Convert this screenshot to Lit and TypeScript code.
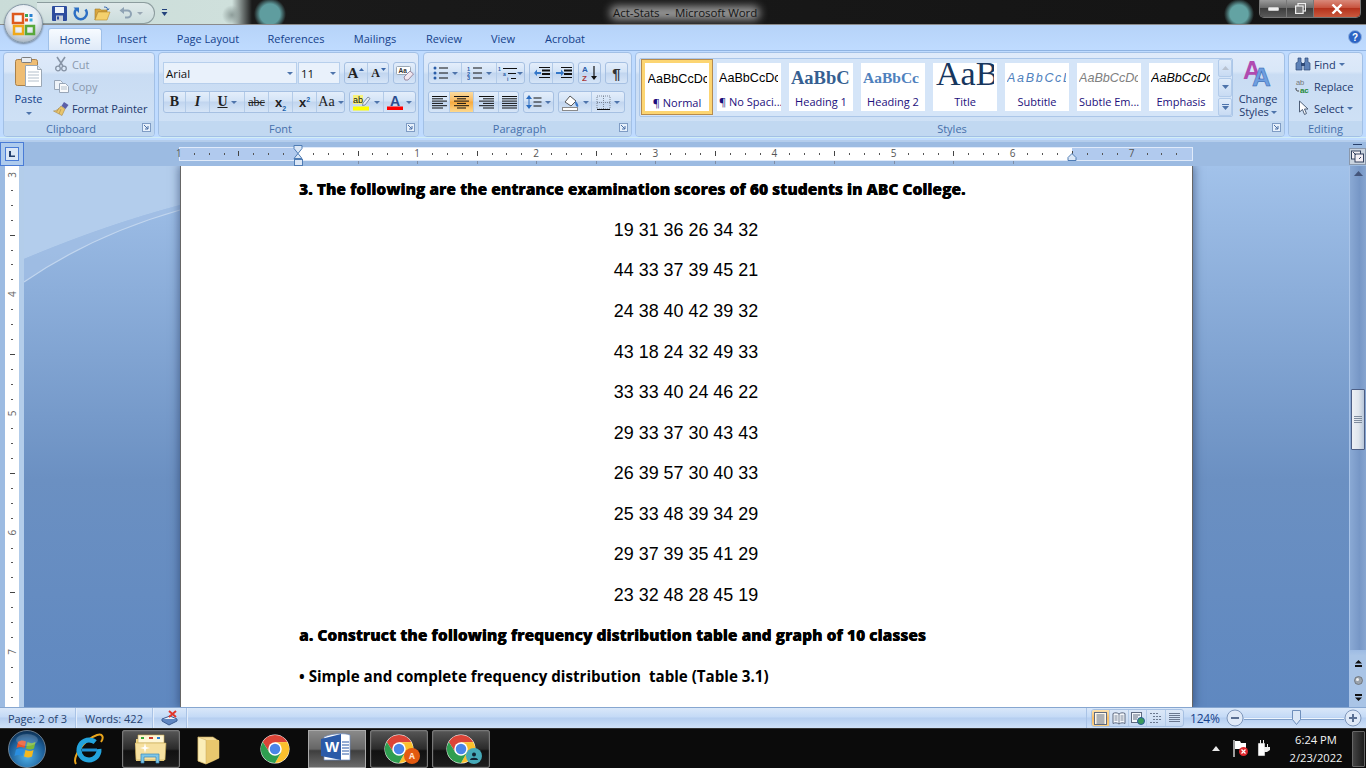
import { LitElement, html, css, svg } from "lit";
import { customElement } from "lit/decorators.js";

const caret = html`<i class="caret"></i>`;
const launcher = html`<svg class="launch" width="9" height="9" viewBox="0 0 9 9"><rect x=".5" y=".5" width="8" height="8" fill="#e6f0fb" stroke="#7f9cc4"/><path d="M2 2l4 4M6 3v3H3" fill="none" stroke="#4a6fa5"/></svg>`;

const lineIcon = (w: number, rows: [number, number][], h = 14) => html`<svg width=${w} height=${h} viewBox="0 0 ${w} ${h}">${rows.map(([x, l], i) => svg`<rect x=${x} y=${1 + i * 2.3} width=${l} height="1" fill="#111"/>`)}</svg>`;

const chrome = (size: number) => html`<svg width=${size} height=${size} viewBox="-16 -16 32 32">
  <circle r="15.5" fill="#fff"/>
  <path d="M-13-7.5A15 15 0 0 1 13-7.5L0-7-6 3.5Z" fill="#db4437"/>
  <path d="M13-7.5A15 15 0 0 1 0 15L6.5 3.5 0-7Z" fill="#fbc02d"/>
  <path d="M0 15A15 15 0 0 1-13-7.5L-6 3.5 6.5 3.5Z" fill="#2f9e50"/>
  <circle r="7.2" fill="#fff"/><circle r="5.6" fill="#4a85e8"/></svg>`;

@customElement("app-root")
export class AppRoot extends LitElement {
  static styles = css`
    :host { display: block; width: 1366px; height: 768px; overflow: hidden; position: relative; font: 11px "Open Sans", "Noto Sans", sans-serif; color: #15428b; }
    .app { display: grid; grid-template-rows: 25px 25px 90px 26px 541px 21px 40px; height: 768px; }
    svg { display: block; flex: none; }

    .orb { position: absolute; left: 4px; top: 4px; width: 37px; height: 37px; border-radius: 50%; z-index: 3; display: flex; align-items: center; justify-content: center;
      background: radial-gradient(circle at 50% 35%, #ffffff 0, #e9eef4 45%, #aab7c4 80%, #d8e0e6 100%); border: 1px solid #8597a6; box-shadow: 0 1px 2px rgba(0,0,0,.4); }

    .title { display: flex; align-items: flex-start; border-bottom: 1px solid #8a8a8a; box-sizing: border-box; position: relative;
      background:
        radial-gradient(circle at 270px 14px, #5f9d9f 0, #5f9d9f 10px, rgba(95,157,159,0) 16px),
        radial-gradient(circle at 1239px 14px, #63a3a3 0, #63a3a3 9px, rgba(99,163,163,0) 15px),
        radial-gradient(circle at 232px 15px, #8d9c99 0, rgba(141,156,153,0) 10px),
        linear-gradient(90deg, #cadcd8 0, #cfe0dc 232px, #1a1a1a 252px, #141414 100%); }
    .qat { margin: 2px 0 0 37px; width: 118px; height: 22px; box-sizing: border-box; border: 1px solid #8c9c9e; border-left: 0; border-radius: 0 11px 11px 0; background: linear-gradient(#dfe9ea, #cbdcdc); display: flex; align-items: center; padding-left: 15px; gap: 6px; }
    .qcaret { margin: 9px 0 0 5px; width: 9px; }
    .doc-title { position: absolute; left: 613px; top: 5px; white-space: pre; font-size: 11.5px; line-height: 16px; color: #161616; isolation: isolate; letter-spacing: -.05px; }
    .doc-title::before { content: ""; position: absolute; left: -3px; right: -3px; top: 1px; bottom: 1px; background: rgba(178,178,178,.82); filter: blur(4px); z-index: -1; border-radius: 6px; }
    .winbtns { margin-left: auto; margin-right: 5px; display: flex; height: 18px; box-sizing: border-box; border: 1px solid #777; border-top: 0; border-radius: 0 0 5px 5px; overflow: hidden; }
    .winbtns div { display: flex; align-items: center; justify-content: center; width: 27px; background: linear-gradient(#9a9a9a, #6a6a6a 45%, #3e3e3e 50%, #5a5a5a); border-right: 1px solid #777; box-sizing: border-box; }
    .winbtns .x { width: 46px; border: 0; background: linear-gradient(#d9897a, #c8543f 45%, #b5321c 50%, #c9593e); }

    .tabs { background: linear-gradient(#b6d3f8, #bfdbff); display: flex; align-items: flex-end; padding-left: 48px; position: relative; }
    .tab { height: 22px; line-height: 22px; color: #15428b; text-align: center; }
    .tab.on { background: linear-gradient(#f7fbff, #dfeaf8); border: 1px solid #9fc0e8; border-bottom: 0; border-radius: 3px 3px 0 0; box-sizing: border-box; }
    .help { position: absolute; right: 4px; top: 5px; }

    .ribbon { background: #bfdbff; border-top: 1px solid #8fb3e2; box-sizing: border-box; display: flex; padding: 1px 3px 0; gap: 3px; position: relative; }
    .ribbon::after { content: ""; position: absolute; left: 0; right: 0; bottom: 2px; height: 1px; background: #d2eef5; }
    .group { height: 85px; box-sizing: border-box; border: 1px solid #a2c0e6; border-radius: 4px; display: flex; flex-direction: column; overflow: hidden; background: linear-gradient(#dfeafa, #d9e7f8 22%, #c9dcf3 26%, #d0e2f6 100%); }
    .gbody { flex: 1; min-height: 0; display: flex; }
    .glabel { height: 15px; line-height: 15px; text-align: center; background: #c1d8f1; color: #4670ab; position: relative; }
    .glabel.pad { padding-right: 16px; }
    .launch { position: absolute; right: 3px; top: 2px; }

    .smalls { display: flex; flex-direction: column; }
    .sm { height: 22px; display: flex; align-items: center; gap: 3px; white-space: nowrap; color: #1e3a6e; letter-spacing: -.1px; }
    .sm.off { color: #8a99ae; }
    .sm .ic { width: 16px; display: flex; justify-content: center; }
    .paste { width: 49px; text-align: center; display: flex; flex-direction: column; align-items: center; padding-top: 3px; }
    .paste span { margin-top: 4px; line-height: 14px; color: #15428b; }
    .paste .caret { margin-top: 6px; }

    .caret { display: inline-block; width: 0; height: 0; border: 3px solid transparent; border-top: 3px solid #4e74ab; border-bottom: 0; flex: none; }
    .rows { display: flex; flex-direction: column; gap: 7px; padding: 9px 0 0 4px; }
    .row { display: flex; gap: 4px; height: 22px; }
    .bg { display: flex; height: 22px; box-sizing: border-box; border: 1px solid #a6c0e2; border-radius: 3px; background: linear-gradient(#e4eefb, #d3e3f6 45%, #c1d5ef 50%, #d6e5f7); overflow: hidden; }
    .seg { display: flex; align-items: center; justify-content: center; gap: 3px; box-sizing: border-box; border-right: 1px solid #b3cbe8; height: 100%; color: #111; flex: none; }
    .seg:last-child { border-right: 0; }
    .seg.on { background: linear-gradient(#fbdca0, #f8b95f 45%, #f6a93e 50%, #fdd98e); }
    .combo { display: flex; height: 22px; gap: 1px; }
    .cb { box-sizing: border-box; border: 1px solid #b7cfec; background: #e9f1fb; display: flex; align-items: center; justify-content: space-between; padding: 0 3px 0 2px; color: #111; font-size: 11.5px; }
    .glyph { font-family: "Liberation Serif", serif; font-weight: 700; color: #222; line-height: 1; }
    .glyph sub, .glyph sup { font-size: 7px; line-height: 0; color: #1a5fa8; }

    .gallery { margin: 5px 0 0 3px; width: 594px; height: 59px; box-sizing: border-box; border: 1px solid #abc6e8; border-radius: 2px; background: #d5e5f8; display: flex; }
    .tiles { display: flex; gap: 8px; padding: 4px 0 0 2px; flex: 1; }
    .tile { width: 64px; height: 48px; background: #fff; overflow: hidden; display: flex; flex-direction: column; align-items: flex-start; flex: none; box-sizing: border-box; padding-left: 2px; }
    .tile.sel { width: 72px; height: 56px; margin: -4px -4px 0 -1px; border: 1px solid #b78b4d; box-shadow: inset 0 0 0 3px #fcd572; padding: 4px 5px 0 5px; align-items: center; }
    .tile .s { height: 30px; width: 59px; overflow: hidden; white-space: nowrap; display: flex; align-items: center; color: #000; font-family: "Liberation Sans", sans-serif; font-size: 12.6px; flex: none; }
    .tile .s.top { align-items: flex-start; }
    .tile .s span { display: block; }
    .tile .n { line-height: 17px; height: 17px; width: 60px; text-align: center; color: #1c0f7c; white-space: nowrap; font-size: 11px; }
    .scroller { width: 14px; display: flex; flex-direction: column; margin-left: auto; gap: 1px; }
    .scroller div { flex: 1; box-sizing: border-box; border: 1px solid #b2cbea; border-radius: 2px; background: linear-gradient(#e0ecfa, #c8dbf3); display: flex; align-items: center; justify-content: center; }
    .change { width: 50px; margin-left: 0; display: flex; flex-direction: column; align-items: center; padding-top: 5px; line-height: 13px; text-align: center; color: #1e3a6e; }
    .change svg { margin-bottom: 5px; }
    .change .caret { margin-left: 2px; vertical-align: 2px; }

    .rulerrow { background: #9cbbe2; border-top: 2px solid #b4cdec; box-sizing: border-box; display: flex; position: relative; }
    .tabbtn { width: 24px; height: 24px; box-sizing: border-box; border: 1px solid #4a7cd6; background: #aecbed; display: flex; align-items: center; justify-content: center; flex: none; }
    .tabbtn div { width: 14px; height: 14px; border: 1px solid #4a7cd6; background: #dbe7f6; box-sizing: border-box; display: flex; align-items: center; justify-content: center; }
    .hruler { margin-left: 155px; overflow: visible; }
    .viewbtn { margin-left: auto; width: 17px; display: flex; flex-direction: column; align-items: center; }
    .viewbtn i { display: block; width: 9px; height: 1px; background: #28406b; margin: 2px 0 3px; }

    .main { display: flex; background: linear-gradient(#a2c2ea, #6b90c2 58%, #5f88c0); position: relative; overflow: hidden; }
    .vruler { width: 24px; flex: none; background: linear-gradient(90deg, #9cbbe2 5px, #fff 5px, #fff 19px, #b3cdea 19px); }
    .swoosh { position: absolute; left: 24px; top: 0; }
    .page { position: relative; margin-left: 156px; width: 1013px; box-sizing: border-box; background: #fff; border-left: 1px solid #666; border-right: 1px solid #666; box-shadow: 0 0 9px 1px rgba(25,45,85,.55); padding: 3.4px 119px 0 118px; color: #000; }
    .l { height: 40.55px; white-space: pre; }
    .h { font: 800 15.55px/40.55px "Open Sans", sans-serif; text-shadow: .3px 0 0 #000; }
    .h2 { font: 700 15.15px/40.55px "Open Sans", sans-serif; }
    .num { font: 17.9px/40.55px "Liberation Sans", Arial, sans-serif; text-align: center; }
    .vscroll { margin-left: auto; width: 17px; flex: none; box-sizing: border-box; border-left: 1px solid #a9c4e8; background: linear-gradient(90deg, #8aa9d4, #7797c6 60%, #86a5d0); display: flex; flex-direction: column; align-items: center; position: relative; }
    .thumb { position: absolute; top: 223px; left: 1px; width: 14px; height: 61px; box-sizing: border-box; border: 1px solid #4d5f85; border-radius: 1px; background: linear-gradient(90deg, #eef1f5, #dfe5ec 55%, #b8c7da); display: flex; flex-direction: column; gap: 1px; align-items: center; justify-content: center; }
    .thumb i { display: block; width: 8px; height: 1px; background: #7f8c9e; }
    .upbtn { margin-top: 5px; }
    .lowbtns { margin-top: auto; width: 100%; height: 57px; background: linear-gradient(#9dbbe3 0, #a9c4e6 10%, #a9c4e6); display: flex; flex-direction: column; align-items: center; justify-content: flex-end; gap: 9px; padding-bottom: 6px; box-sizing: border-box; }

    .status { background: linear-gradient(#d9e7f9, #c4daf6 45%, #b5cef0 50%, #cfe1f8); border-top: 1px solid #86a6d0; box-sizing: border-box; display: flex; align-items: stretch; color: #26426f; }
    .st { display: flex; align-items: center; justify-content: center; box-sizing: border-box; border-right: 1px solid #a9c3e6; box-shadow: 1px 0 0 #e4eefb; }
    .views { margin-left: auto; display: flex; align-items: center; padding-left: 4px; border-left: 1px solid #a9c3e6; }
    .vg { display: flex; height: 18px; width: 93px; box-sizing: border-box; border: 1px solid #a6c0e2; border-radius: 3px; overflow: hidden; background: linear-gradient(#dce8f8, #c6d9f2); }
    .vg div { flex: 1; display: flex; align-items: center; justify-content: center; border-right: 1px solid #b3cbe8; }
    .vg div:last-child { border-right: 0; }
    .vg .on { background: linear-gradient(#fbe2b0, #f8bd66 50%, #fad083); }
    .zoomv { width: 28px; margin-left: 6px; font-size: 12px; color: #15428b; letter-spacing: -.2px; white-space: nowrap; }
    .zoomctl { display: flex; align-items: center; margin: 0 4px 0 8px; }
    .slider { width: 100px; height: 1px; background: #eef5fd; box-shadow: 0 1px 0 #7f9fca; position: relative; margin: 0 0px; }
    .slider svg { position: absolute; left: 48px; top: -8px; }

    .taskbar { background: #0b0b0b; border-top: 1px solid #333; box-sizing: border-box; display: flex; align-items: center; color: #fff; }
    .tslot { width: 58px; height: 38px; margin-right: 4px; box-sizing: border-box; display: flex; align-items: center; justify-content: center; flex: none; position: relative; }
    .tslot.glass { border: 1px solid #777; border-radius: 2px; background: linear-gradient(#565656, #2b2b2b 50%, #111 55%, #1d1d1d); box-shadow: inset 0 0 1px #aaa; }
    .tslot.act { border: 1px solid #aaa; background: linear-gradient(#8a8a8a, #666 50%, #3e3e3e 55%, #6a6a6a); }
    .badge { position: absolute; right: 7px; bottom: 3px; width: 16px; height: 16px; border-radius: 50%; display: flex; align-items: center; justify-content: center; font-size: 8.5px; font-weight: 700; color: #ffe3cf; }
    .clock { margin-left: auto; display: flex; align-items: center; }
    .time { width: 60px; text-align: center; font-size: 11.2px; line-height: 18px; color: #f2f2f2; margin: 0 0 0 15px; white-space: nowrap; }
    .showd { width: 13px; height: 36px; margin: 0 1px 0 6px; box-sizing: border-box; border: 1px solid #666; border-radius: 1px; background: linear-gradient(90deg, #444, #1c1c1c); }
  `;

  private hRuler() {
    const O = 119, I = 119.1;
    const marks = [] as unknown[];
    for (let k = -8; k <= 60; k++) {
      const x = O + (k * I) / 8;
      if (x > 1010) continue;
      if (k === 0) continue;
      if (k % 8 === 0) {
        const n = Math.abs(k / 8);
        marks.push(svg`<text x=${x} y="15" text-anchor="middle" font-size="10" font-family="Open Sans" fill="#555">${n}</text>`);
      } else if (k % 4 === 0) {
        marks.push(svg`<rect x=${Math.round(x)} y="9" width="1" height="5" fill="#444"/>`);
      } else {
        marks.push(svg`<rect x=${Math.round(x)} y="11" width="1" height="2" fill="#555"/>`);
      }
    }
    for (let k = 1; k <= 12; k++) {
      marks.push(svg`<rect x=${Math.round(O + k * I / 2)} y="19" width="1" height="3" fill="#7f8ea6"/>`);
    }
    return html`<svg class="hruler" width="1015" height="24" viewBox="0 0 1015 24">
      <rect x=".5" y="5.5" width="1013" height="13" fill="#b1caee" stroke="#dfeafa"/>
      <rect x="119" y="6" width="774" height="12" fill="#fff"/>
      ${marks}
      <path d="M115 3.500h8v3l-4 5 4 5v0h-8v0l4-5-4-5z" fill="#dbe7f6" stroke="#4f7cb4"/>
      <rect x="115.500" y="17.500" width="8" height="6" fill="#dbe7f6" stroke="#4f7cb4"/>
      <path d="M893 11.500l4 4v3h-8v-3z" fill="#dbe7f6" stroke="#4f7cb4"/>
    </svg>`;
  }

  private vRuler() {
    const marks = [] as unknown[];
    const O = 9, I = 119.2;
    for (let k = 0; k <= 40; k++) {
      const y = O + (k * I) / 8;
      if (y > 541) continue;
      if (k % 8 === 0) {
        const n = 3 + k / 8;
        marks.push(svg`<text transform="translate(16 ${y}) rotate(-90)" text-anchor="middle" font-size="10" font-family="Open Sans" fill="#666">${n}</text>`);
      } else if (k % 4 === 0) {
        marks.push(svg`<rect x="10" y=${Math.round(y)} width="5" height="1" fill="#444"/>`);
      } else {
        marks.push(svg`<rect x="11" y=${Math.round(y)} width="2" height="1" fill="#555"/>`);
      }
    }
    return html`<div class="vruler"><svg width="24" height="541" viewBox="0 0 24 541">${marks}</svg></div>`;
  }

  private ribbon() {
    const fontRow2 = [
      { w: 22, c: html`<span class="glyph" style="font-size:14px;font-weight:700">B</span>` },
      { w: 24, c: html`<span class="glyph" style="font-size:14px;font-style:italic">I</span>` },
      { w: 35, c: html`<span class="glyph" style="font-size:14px;text-decoration:underline">U</span>${caret}` },
      { w: 24, c: html`<span class="glyph" style="font-size:12px;text-decoration:line-through;font-weight:400">abc</span>` },
      { w: 24, c: html`<span class="glyph" style="font-size:13px;font-family:'Liberation Sans'">x<sub>2</sub></span>` },
      { w: 24, c: html`<span class="glyph" style="font-size:13px;font-family:'Liberation Sans'">x<sup>2</sup></span>` },
      { w: 28, c: html`<span class="glyph" style="font-size:14px;font-weight:400">Aa</span>${caret}` },
    ];
    const align = [[0, 15], [0, 11], [0, 15], [0, 11], [0, 15], [0, 11]] as [number, number][];
    const center = [[0, 15], [3, 9], [0, 15], [3, 9], [0, 15], [3, 9]] as [number, number][];
    const right = [[0, 15], [4, 11], [0, 15], [4, 11], [0, 15], [4, 11]] as [number, number][];
    const just = [[0, 15], [0, 15], [0, 15], [0, 15], [0, 15], [0, 15]] as [number, number][];
    const bullets = html`<svg width="16" height="14" viewBox="0 0 16 14"><g fill="#2a5da8"><circle cx="2" cy="2" r="1.500"/><circle cx="2" cy="7" r="1.500"/><circle cx="2" cy="12" r="1.500"/></g><g fill="#111"><rect x="6" y="1.500" width="9" height="1"/><rect x="6" y="6.500" width="9" height="1"/><rect x="6" y="11.500" width="9" height="1"/></g></svg>`;
    const numbers = html`<svg width="16" height="14" viewBox="0 0 16 14"><g fill="#2a5da8" font-size="5.500" font-family="Liberation Sans" font-weight="700"><text x="0" y="5">1</text><text x="0" y="10">2</text><text x="0" y="14">3</text></g><g fill="#111"><rect x="6" y="1.500" width="9" height="1"/><rect x="6" y="6.500" width="9" height="1"/><rect x="6" y="11.500" width="9" height="1"/></g></svg>`;
    const multi = html`<svg width="19" height="15" viewBox="0 0 19 15"><g fill="#2a5da8" font-size="5" font-family="Liberation Sans" font-weight="700"><text x="0" y="5">1</text><text x="5" y="10">a</text><text x="9" y="15">i</text></g><g fill="#111"><rect x="5" y="2" width="14" height="1"/><rect x="10" y="7" width="8" height="1"/><rect x="13" y="12" width="5" height="1"/></g></svg>`;
    const indent = (flip: boolean) => html`<svg width="17" height="14" viewBox="0 0 17 14"><g fill="#111"><rect x="6" y="1" width="11" height="1"/><rect x="9" y="3.500" width="8" height="2"/><rect x="9" y="7" width="8" height="2"/><rect x="6" y="11" width="11" height="1"/></g><path d=${flip ? "M1 6h5V3.500L9 7 6 10V8H1z" : "M8 6H4V3.500L1 7l3 3V8h4z"} fill="#3477c8"/></svg>`;
    const tiles = [
      { n: "\u00b6 Normal", sel: true, t: "AaBbCcDc", st: "" },
      { n: "\u00b6 No Spaci...", t: "AaBbCcDc", st: "" },
      { n: "Heading 1", t: "AaBbCc", st: "font-family:'Liberation Serif';font-weight:700;font-size:18.500px;color:#365f91" },
      { n: "Heading 2", t: "AaBbCc", st: "font-family:'Liberation Serif';font-weight:700;font-size:15.500px;color:#4f81bd" },
      { n: "Title", t: "AaB", top: true, st: "font-family:'Liberation Serif';font-size:34px;line-height:34px;color:#17365d;margin:-6px 0 0 1px" },
      { n: "Subtitle", t: "AaBbCcDc", st: "font-style:italic;font-size:12.500px;letter-spacing:1.700px;color:#4f81bd" },
      { n: "Subtle Em...", t: "AaBbCcDc", st: "font-style:italic;color:#808080" },
      { n: "Emphasis", t: "AaBbCcDc", st: "font-style:italic" },
    ];
    return html`<div class="ribbon">
      <section class="group" style="width:152px">
        <div class="gbody">
          <div class="paste">
            <svg width="27" height="32" viewBox="0 0 27 32"><rect x=".5" y="3.500" width="22" height="26" rx="2" fill="#efbd73" stroke="#a9804a"/><rect x="6.500" y="1.500" width="10" height="5" rx="1" fill="#e7ecf2" stroke="#7d7d7d"/><path d="M10.500 9.500h12l4 4v17h-16z" fill="#fff" stroke="#9aa7b5"/><path d="M22.500 9.500v4h4" fill="#dde5ee" stroke="#9aa7b5"/><path d="M13 16h11M13 19h11M13 22h11M13 25h11" stroke="#b3bfcb"/></svg>
            <span>Paste</span>${caret}
          </div>
          <div class="smalls">
            <div class="sm off"><span class="ic"><svg width="14" height="16" viewBox="0 0 14 16"><path d="M3 1l6 9M11 1L5 10" stroke="#8794a6" stroke-width="1.600" fill="none"/><circle cx="4" cy="12.500" r="2.300" fill="none" stroke="#8794a6" stroke-width="1.300"/><circle cx="10" cy="12.500" r="2.300" fill="none" stroke="#8794a6" stroke-width="1.300"/></svg></span>Cut</div>
            <div class="sm off"><span class="ic"><svg width="16" height="14" viewBox="0 0 16 14"><path d="M1.500 1.500h6l2 2v7h-8z" fill="#eef3f9" stroke="#98a6b8"/><path d="M6.500 4.500h6l3 3v6h-9z" fill="#f8fafc" stroke="#98a6b8"/><path d="M8 8h6M8 10h6" stroke="#b3bfcb"/></svg></span>Copy</div>
            <div class="sm"><span class="ic"><svg width="17" height="15" viewBox="0 0 17 15"><path d="M11 1l4.500 3-3 4-4-3z" fill="#5a5fa8"/><path d="M8 5l4 3-3 6.500L.500 10C3 10 6 8 8 5z" fill="#e8c56c" stroke="#a8874a" stroke-width=".6"/><path d="M6 7l-2.500 4M8 8l-2 5" stroke="#a8874a" stroke-width=".6"/></svg></span>Format Painter</div>
          </div>
        </div>
        <div class="glabel pad">Clipboard${launcher}</div>
      </section>

      <section class="group" style="width:261px">
        <div class="gbody"><div class="rows">
          <div class="row">
            <div class="combo">
              <div class="cb" style="width:134px">Arial${caret}</div>
              <div class="cb" style="width:42px">11${caret}</div>
            </div>
            <div class="bg" style="width:45px">
              <div class="seg" style="width:23px"><span class="glyph" style="font-size:15px">A</span><svg width="5" height="3" viewBox="0 0 5 3" style="margin:-8px 0 0 -2px"><path d="M0 3l2.500-3L5 3z" fill="#3a66a8"/></svg></div>
              <div class="seg" style="width:21px"><span class="glyph" style="font-size:12px">A</span><svg width="5" height="3" viewBox="0 0 5 3" style="margin:-8px 0 0 -2px"><path d="M0 0l2.500 3L5 0z" fill="#3a66a8"/></svg></div>
            </div>
            <div class="bg" style="width:23px"><div class="seg" style="width:21px"><svg width="18" height="16" viewBox="0 0 18 16"><rect x=".5" y="1.500" width="14" height="8" rx="1" fill="#fff" stroke="#9aa7b5"/><text x="2.500" y="8" font-size="6.500" font-family="Liberation Sans" font-weight="700" fill="#333">Aa</text><path d="M8 12l6-6 3.500 3-5.500 6H9z" fill="#f0e6ef" stroke="#9a8aa0"/></svg></div></div>
          </div>
          <div class="row">
            <div class="bg" style="width:182px">${fontRow2.map((s) => html`<div class="seg" style="width:${s.w}px">${s.c}</div>`)}</div>
            <div class="bg" style="width:67px">
              <div class="seg" style="width:34px"><svg width="18" height="17" viewBox="0 0 18 17"><rect x="0" y="1" width="10" height="9" fill="#f7f17a"/><text x="0" y="9" font-size="9" font-family="Liberation Sans" fill="#111">ab</text><path d="M10 9l5-6 2 1.500-5 6.500-2.500.5z" fill="#e6eef7" stroke="#6a7a94" stroke-width=".8"/><rect x="0" y="12.500" width="16" height="4" fill="#ffff00"/></svg>${caret}</div>
              <div class="seg" style="width:31px"><svg width="16" height="16" viewBox="0 0 16 16"><text x="8" y="11.500" text-anchor="middle" font-size="14" font-weight="700" font-family="Liberation Sans" fill="#2c4d8f">A</text><rect x="0" y="12.500" width="16" height="3.500" fill="#f00"/></svg>${caret}</div>
            </div>
          </div>
        </div></div>
        <div class="glabel pad">Font${launcher}</div>
      </section>

      <section class="group" style="width:209px;margin-left:1px">
        <div class="gbody"><div class="rows">
          <div class="row">
            <div class="bg" style="width:97px">
              <div class="seg" style="width:33px">${bullets}${caret}</div>
              <div class="seg" style="width:35px">${numbers}${caret}</div>
              <div class="seg" style="width:27px;gap:0">${multi}${caret}</div>
            </div>
            <div class="bg" style="width:45px">
              <div class="seg" style="width:23px">${indent(false)}</div>
              <div class="seg" style="width:21px">${indent(true)}</div>
            </div>
            <div class="bg" style="width:23px"><div class="seg" style="width:21px"><svg width="16" height="16" viewBox="0 0 16 16"><text x="0" y="7" font-size="8" font-weight="700" font-family="Liberation Sans" fill="#2a5da8">A</text><text x="0" y="15.500" font-size="8" font-weight="700" font-family="Liberation Sans" fill="#a83a3a">Z</text><path d="M12 1v11" stroke="#111" stroke-width="1.200"/><path d="M9 11h6l-3 4z" fill="#111"/></svg></div></div>
            <div class="bg" style="width:23px"><div class="seg" style="width:21px"><span class="glyph" style="font-size:15px;font-family:'Liberation Sans';color:#333">\u00b6</span></div></div>
          </div>
          <div class="row">
            <div class="bg" style="width:91px">
              <div class="seg" style="width:21px">${lineIcon(15, align)}</div>
              <div class="seg on" style="width:24px">${lineIcon(15, center)}</div>
              <div class="seg" style="width:25px">${lineIcon(15, right)}</div>
              <div class="seg" style="width:20px">${lineIcon(15, just)}</div>
            </div>
            <div class="bg" style="width:31px"><div class="seg" style="width:29px"><svg width="16" height="16" viewBox="0 0 16 16"><path d="M3 1l3 4H0zM3 15l3-4H0z" fill="#2a6cc0"/><path d="M3 5v6" stroke="#2a6cc0"/><path d="M7.500 4h8M7.500 8h8M7.500 12h8" stroke="#111"/></svg>${caret}</div></div>
            <div class="bg" style="width:67px">
              <div class="seg" style="width:33px"><svg width="18" height="17" viewBox="0 0 18 17"><path d="M3 8l5-6 6 5-5 5z" fill="#fff" stroke="#555"/><path d="M13 7c2 1 4 4 3 6-2 0-3-3-3-6z" fill="#3a78c8"/><rect x=".5" y="13.500" width="15" height="3" fill="#fff" stroke="#8a8a8a"/></svg>${caret}</div>
              <div class="seg" style="width:32px"><svg width="15" height="15" viewBox="0 0 15 15"><path d="M1 1h13v13H1zM7.500 1v13M1 7.500h13" fill="none" stroke="#7a8696" stroke-dasharray="1 1"/><path d="M1 14.500h13" stroke="#111"/></svg>${caret}</div>
            </div>
          </div>
        </div></div>
        <div class="glabel pad">Paragraph${launcher}</div>
      </section>

      <section class="group" style="width:650px">
        <div class="gbody">
          <div class="gallery">
            <div class="tiles">
              ${tiles.map((t) => html`<div class="tile ${t.sel ? "sel" : ""}"><div class="s ${t.top ? "top" : ""}"><span style=${t.st}>${t.t}</span></div><div class="n">${t.n}</div></div>`)}
            </div>
            <div class="scroller">
              <div><svg width="7" height="4" viewBox="0 0 7 4"><path d="M0 4l3.500-4L7 4z" fill="#b8c2d0"/></svg></div>
              <div><svg width="7" height="4" viewBox="0 0 7 4"><path d="M0 0l3.500 4L7 0z" fill="#4e74ab"/></svg></div>
              <div><svg width="7" height="6" viewBox="0 0 7 6"><path d="M0 0h7v1H0zM0 2l3.500 4L7 2z" fill="#4e74ab"/></svg></div>
            </div>
          </div>
          <div class="change">
            <svg width="30" height="29" viewBox="0 0 30 29"><text x="0" y="21" font-size="25" font-weight="700" font-family="Liberation Sans" fill="#b04bb0">A</text><text x="9" y="28" font-size="26" font-weight="700" font-family="Liberation Sans" fill="#6f9fe0" stroke="#2f62ad" stroke-width=".5">A</text></svg>
            <div>Change<br/>Styles<i class="caret"></i></div>
          </div>
        </div>
        <div class="glabel pad">Styles${launcher}</div>
      </section>

      <section class="group" style="width:75px">
        <div class="gbody" style="padding-left:6px"><div class="smalls">
          <div class="sm"><span class="ic"><svg width="16" height="14" viewBox="0 0 16 14"><path d="M3 1h3v4l1 1v7H1V6l2-1zM10 1h3v4l2 1v7H9V6l1-1z" fill="#5e82b8" stroke="#2f4a78" stroke-width=".7"/><rect x="6" y="6" width="4" height="3" fill="#2f4a78"/></svg></span>Find ${caret}</div>
          <div class="sm"><span class="ic"><svg width="16" height="16" viewBox="0 0 16 16"><text x="1" y="7" font-size="7.500" font-family="Liberation Sans" fill="#777">ab</text><text x="5" y="15" font-size="8" font-weight="700" font-family="Liberation Sans" fill="#1f8a3a">ac</text><path d="M1 10c0 3 1 3 3 3" fill="none" stroke="#333"/></svg></span>Replace</div>
          <div class="sm"><span class="ic"><svg width="13" height="16" viewBox="0 0 13 16"><path d="M2.500 1v11l3-2.500 2 5 2-1-2-4.500H11z" fill="#fff" stroke="#4d5d76"/></svg></span>Select ${caret}</div>
        </div></div>
        <div class="glabel">Editing</div>
      </section>
    </div>`;
  }

  render() {
    const tabs = [["Insert", 58], ["Page Layout", 94], ["References", 82], ["Mailings", 76], ["Review", 62], ["View", 56], ["Acrobat", 68]] as [string, number][];
    const numbers = ["19 31 36 26 34 32", "44 33 37 39 45 21", "24 38 40 42 39 32", "43 18 24 32 49 33", "33 33 40 24 46 22", "29 33 37 30 43 43", "26 39 57 30 40 33", "25 33 48 39 34 29", "29 37 39 35 41 29", "23 32 48 28 45 19"];
    const viewIcons = [
      html`<svg width="13" height="13" viewBox="0 0 13 13"><rect x=".5" y=".5" width="12" height="12" fill="#fff8e8" stroke="#5e6a80"/><path d="M2.500 3h8M2.500 5h8M2.500 7h8M2.500 9h8M2.500 11h8" stroke="#5e6a80"/></svg>`,
      html`<svg width="14" height="13" viewBox="0 0 14 13"><path d="M1 1.500c2-1 4-1 6 .5 2-1.500 4-1.500 6-.5v10c-2-1-4-1-6 .5-2-1.500-4-1.500-6-.5z" fill="#f4f7fb" stroke="#5e6a80"/><path d="M7 2v10M2.500 4h3M2.500 6h3M2.500 8h3M8.500 4h3M8.500 6h3M8.500 8h3" stroke="#5e6a80" stroke-width=".8"/></svg>`,
      html`<svg width="14" height="13" viewBox="0 0 14 13"><rect x=".5" y=".5" width="10" height="10" fill="#f4f7fb" stroke="#5e6a80"/><path d="M2 3h7M2 5h5M2 7h4" stroke="#5e6a80"/><circle cx="10" cy="9" r="3.500" fill="#3a9a5a" stroke="#2a5a9a"/></svg>`,
      html`<svg width="13" height="12" viewBox="0 0 13 12"><path d="M1 1.500h8M4 4.500h8M4 7.500h8M1 10.500h8" stroke="#6a7890" stroke-dasharray="2 1"/></svg>`,
      html`<svg width="13" height="12" viewBox="0 0 13 12"><path d="M1 1.500h11M1 3.500h11M1 5.500h11M1 7.500h11M1 9.500h11" stroke="#6a7890"/></svg>`,
    ];
    return html`<div class="app">
      <div class="orb">
        <svg width="26" height="26" viewBox="0 0 26 26">
          <path d="M2 3h10v9H2z" fill="none" stroke="#dd5a1e" stroke-width="2.500"/>
          <rect x="14" y="3" width="3" height="3" fill="#3aa655"/><rect x="18.500" y="3" width="3" height="3" fill="#2a7fd0"/><rect x="14" y="7.500" width="3" height="3" fill="#e05a20"/><rect x="18.500" y="7.500" width="3" height="3" fill="#39a9dc"/>
          <path d="M3 15h9v8H3z" fill="none" stroke="#f0a818" stroke-width="2.500"/>
          <path d="M15 15h8v8h-8z" fill="none" stroke="#58a83a" stroke-width="2.500"/>
        </svg>
      </div>
      <header class="title">
        <div class="qat">
          <svg width="15" height="15" viewBox="0 0 15 15"><rect width="15" height="15" rx="1" fill="#2d4c9e"/><rect x="3" y="1" width="9" height="6" fill="#eef3fa"/><rect x="4" y="9.500" width="7" height="5.500" fill="#c8cfd8"/><rect x="5" y="10.500" width="2" height="3" fill="#2d4c9e"/></svg>
          <svg width="15" height="15" viewBox="0 0 15 15"><path d="M3 3.500a6 6 0 1 0 9.500 0" fill="none" stroke="#2c6fc4" stroke-width="2.600"/><path d="M.5 1.500h5.500v5.500z" fill="#2c6fc4"/></svg>
          <svg width="17" height="15" viewBox="0 0 17 15"><path d="M1 3h5l1 1h6v2H4L1 14z" fill="#d9a63c" stroke="#a07a28" stroke-width=".6"/><path d="M4 6h12l-3 8H1z" fill="#f4d06c" stroke="#b8892e" stroke-width=".6"/><path d="M10 1c3 0 4 1 4 3M14 4l-1.500-1M14 4l1-1.500" fill="none" stroke="#3a6ab0"/></svg>
          <svg width="13" height="12" viewBox="0 0 13 12" style="margin-left:2px"><path d="M3.500 3.500h5a3.500 3.500 0 0 1 0 7H6" fill="none" stroke="#8fa3b4" stroke-width="2"/><path d="M.500 3.500L5 0v7z" fill="#8fa3b4"/></svg>
          <i class="caret" style="border-top-color:#9aa8b4;margin-left:-1px"></i>
        </div>
        <svg class="qcaret" width="9" height="8" viewBox="0 0 9 8"><path d="M2 0h5v1H2zM1.500 3h6L4.500 7z" fill="#24427c"/></svg>
        <div class="doc-title">Act-Stats  -  Microsoft Word</div>
        <div class="winbtns">
          <div><svg width="11" height="4" viewBox="0 0 11 4"><rect width="11" height="4" rx="1" fill="#eee" stroke="#555" stroke-width=".5"/></svg></div>
          <div><svg width="11" height="11" viewBox="0 0 11 11"><rect x="3" y=".5" width="7.500" height="7.500" fill="none" stroke="#eee" stroke-width="1.200"/><rect x=".6" y="3" width="7.500" height="7.500" fill="#777" stroke="#eee" stroke-width="1.200"/></svg></div>
          <div class="x"><svg width="12" height="10" viewBox="0 0 12 10"><path d="M1.500 .5l9 9M10.500 .5l-9 9" stroke="#fff" stroke-width="2.400"/></svg></div>
        </div>
      </header>

      <nav class="tabs">
        <div class="tab on" style="width:54px">Home</div>
        <div style="width:1px"></div>
        ${tabs.map(([t, w]) => html`<div class="tab" style="width:${w}px">${t}</div>`)}
        <svg class="help" width="14" height="14" viewBox="0 0 14 14"><circle cx="7" cy="7" r="6.500" fill="#2b63c4" stroke="#8fb0e0"/><text x="7" y="10.500" text-anchor="middle" font-size="10" font-weight="700" font-family="Liberation Sans" fill="#fff">?</text></svg>
      </nav>

      ${this.ribbon()}

      <div class="rulerrow">
        <div class="tabbtn"><div><svg width="8" height="8" viewBox="0 0 8 8"><path d="M1 1h2v4.500h4V7H1z" fill="#24406e"/></svg></div></div>
        ${this.hRuler()}
        <div class="viewbtn"><i></i><svg width="17" height="17" viewBox="0 0 17 17"><rect x=".5" y=".5" width="16" height="16" fill="#c9d3df" stroke="#8a98ac"/><rect x="2.500" y="3" width="9" height="8" fill="#f2eef4" stroke="#33415e"/><rect x="6" y="6" width="8.500" height="8" fill="#f2eef4" stroke="#33415e"/><path d="M4 4l3 3M12 9l-2 2" stroke="#33415e"/></svg></div>
      </div>

      <div class="main">
        <svg class="swoosh" width="156" height="541" viewBox="0 0 156 541">
          <path d="M0 0H156V39C100 54 50 72 0 93Z" fill="#b3cdec"/>
          <path d="M0 93C50 72 100 54 156 39V44C100 60 45 85 0 116Z" fill="#a4c0e5" opacity=".7"/>
          <path d="M0 116C45 85 100 60 156 44" fill="none" stroke="#c2d6ee" stroke-width="1.200"/>
        </svg>
        ${this.vRuler()}
        <article class="page">
          <div class="l h">3. The following are the entrance examination scores of 60 students in ABC College.</div>
          ${numbers.map((n) => html`<div class="l num">${n}</div>`)}
          <div class="l h">a. Construct the following frequency distribution table and graph of 10 classes</div>
          <div class="l h2">\u2022 Simple and complete frequency distribution  table (Table 3.1)</div>
        </article>
        <aside class="vscroll">
          <svg class="upbtn" width="9" height="5" viewBox="0 0 9 5"><path d="M0 5l4.500-5L9 5z" fill="#44557a"/></svg>
          <div class="thumb"><i></i><i></i><i></i><i></i></div>
          <div class="lowbtns">
            <svg width="7" height="7" viewBox="0 0 7 7"><path d="M3.500 0L7 3.500H0zM0 5h7v2H0z" fill="#111"/></svg>
            <svg width="9" height="9" viewBox="0 0 9 9"><circle cx="4.500" cy="4.500" r="4" fill="#9aa3ad" stroke="#555" stroke-width=".6"/><circle cx="3.500" cy="3.500" r="1.500" fill="#eee"/></svg>
            <svg width="7" height="7" viewBox="0 0 7 7"><path d="M0 0h7v2H0zM0 3.500h7L3.500 7z" fill="#111"/></svg>
          </div>
        </aside>
      </div>

      <footer class="status">
        <div class="st" style="width:76px">Page: 2 of 3</div>
        <div class="st" style="width:77px">Words: 422</div>
        <div class="st" style="width:34px"><svg width="18" height="16" viewBox="0 0 18 16"><path d="M1 9l8-3 7 3-8 4z" fill="#eef3fa" stroke="#3a5c94"/><path d="M1 9v2l7 4 8-4V9" fill="#5f86c2" stroke="#3a5c94"/><path d="M8 1l7 6M15 1L8 7" stroke="#e0352b" stroke-width="2"/></svg></div>
        <div class="views">
          <div class="vg">${viewIcons.map((ic, k) => html`<div class=${k === 0 ? "on" : ""}>${ic}</div>`)}</div>
          <div class="zoomv">124%</div>
          <div class="zoomctl">
            <svg width="18" height="18" viewBox="0 0 18 18"><circle cx="9" cy="9" r="8" fill="#dfe9f7" stroke="#7f97bb"/><rect x="5" y="8" width="8" height="2" fill="#5a6f92"/></svg>
            <div class="slider"><svg width="9" height="15" viewBox="0 0 9 15"><path d="M.5 .5h8v9l-4 5-4-5z" fill="#dbe7f6" stroke="#6f8fbb"/></svg></div>
            <svg width="18" height="18" viewBox="0 0 18 18"><circle cx="9" cy="9" r="8" fill="#dfe9f7" stroke="#7f97bb"/><path d="M5 8h3V5h2v3h3v2h-3v3H8v-3H5z" fill="#5a6f92"/></svg>
          </div>
        </div>
      </footer>

      <div class="taskbar">
        <svg style="margin:0 27px 0 8px" width="38" height="38" viewBox="0 0 38 38"><defs><radialGradient id="o" cx=".5" cy=".7" r=".7"><stop offset="0" stop-color="#4fb0e8"/><stop offset=".7" stop-color="#1a5a94"/><stop offset="1" stop-color="#0c2c4c"/></radialGradient></defs><circle cx="19" cy="19" r="18.500" fill="url(#o)" stroke="#8fa4b4" stroke-width=".7"/><path d="M10 12c3-2 5-2 8-.5L16.500 18c-3-1.500-5-1.500-8 0z" fill="#e8542a"/><path d="M19.500 12c3 1.500 5 1.500 8 0L26 18.500c-3 1.500-5 1-8 0z" fill="#7cb83a"/><path d="M8 19.500c3-1.500 5-1.500 8 0L14.500 26c-3-1.500-5-1.500-8 0z" fill="#2a8ee0"/><path d="M17.500 20c3 1 5 1.500 8 0L24 26.500c-3 1.500-5 1-8 0z" fill="#f4b81e"/><ellipse cx="19" cy="10" rx="11" ry="6" fill="#fff" opacity=".18"/></svg>
        <svg style="margin-right:17px" width="32" height="34" viewBox="0 0 32 34"><path d="M3 32C-1 26 10 8 24 3c6-2 7 3 4 7" fill="none" stroke="#e9a51c" stroke-width="2"/><circle cx="16" cy="18" r="10" fill="none" stroke="#23a3dc" stroke-width="5" stroke-dasharray="50 8" transform="rotate(20 16 18)"/><rect x="9" y="16.500" width="15" height="3" fill="#1f8fd0"/></svg>
        <div class="tslot glass"><svg width="32" height="30" viewBox="0 0 32 30"><path d="M1 5h28v22H1z" fill="#f0d584"/><path d="M3 1h26v8H3z" fill="#fff6d5" stroke="#c8a850" stroke-width=".6"/><rect x="6" y="3" width="3" height="2" fill="#35a835"/><rect x="14" y="3" width="4" height="2" fill="#c83a2a"/><rect x="22" y="3" width="3" height="2" fill="#2a7fd0"/><path d="M0 9h31l-1 17H1z" fill="#f6e0a0" stroke="#c8a850" stroke-width=".6"/><path d="M6 29v-9h18v9h-3v-6H9v6z" fill="#7dc6e8" stroke="#3a88b8" stroke-width=".7"/><path d="M10 9l1 4 4 1-4 1-1 4-1-4-4-1 4-1z" fill="#fff"/></svg></div>
        <svg style="margin:0 39px 0 13px" width="24" height="32" viewBox="0 0 24 32"><path d="M1 4h15l6 4v17l-6 3-7 3-8-3z" fill="#f4dc9a" stroke="#c4a65a" stroke-width=".6"/><path d="M8 7h14v18L9 31z" fill="#e9c86e"/><path d="M1 4l8 3v24l-8-3z" fill="#fbeeb8" stroke="#c4a65a" stroke-width=".5"/></svg>
        <div style="width:30px;margin:0 18px 0 0">${chrome(30)}</div>
        <div class="tslot act" style="margin-left:0"><svg width="32" height="33" viewBox="0 0 32 33"><path d="M3 5C12 1 24 1 29 3v25H3z" fill="#fff" stroke="#6a8ac0" stroke-width=".7"/><path d="M0 7l20-5v26L0 24z" fill="#2a5aa8"/><text x="4" y="20" font-size="15" font-weight="700" font-family="Liberation Sans" fill="#fff">W</text><path d="M21 10h7M21 13h7M21 16h7M21 19h7M21 22h7" stroke="#2a5aa8" stroke-width="1.200"/></svg></div>
        <div class="tslot glass">${chrome(30)}<div class="badge" style="background:#e2590f">A</div></div>
        <div class="tslot glass">${chrome(30)}<div class="badge" style="background:#45a9b8"><svg width="8" height="8" viewBox="0 0 8 8"><circle cx="4" cy="2.500" r="2" fill="#123"/><path d="M0 8c0-3 8-3 8 0z" fill="#123"/></svg></div></div>
        <div class="clock">
          <svg style="margin-right:13px" width="8" height="5" viewBox="0 0 8 5"><path d="M0 5l4-5 4 5z" fill="#e8e8e8"/></svg>
          <svg style="margin-right:8px" width="16" height="17" viewBox="0 0 16 17"><path d="M1 0v17" stroke="#fff" stroke-width="1.200"/><path d="M2 1h5l1 2h5v6H2z" fill="#fff"/><circle cx="10.500" cy="11.500" r="4.500" fill="#e0282e"/><path d="M8.500 9.500l4 4M12.500 9.500l-4 4" stroke="#fff" stroke-width="1.200"/></svg>
          <svg width="14" height="17" viewBox="0 0 14 17"><path d="M1 3h7v13H1z" fill="#fff" stroke="#222" stroke-width=".5"/><path d="M3 0h1v4H3zM6 0h1v4H6z" fill="#eee"/><path d="M7 7h3V4h1v3h2v3l-3 2H7z" fill="#eee"/></svg>
          <div class="time">6:24 PM<br/>2/23/2022</div>
          <div class="showd"></div>
        </div>
      </div>
    </div>`;
  }
}
